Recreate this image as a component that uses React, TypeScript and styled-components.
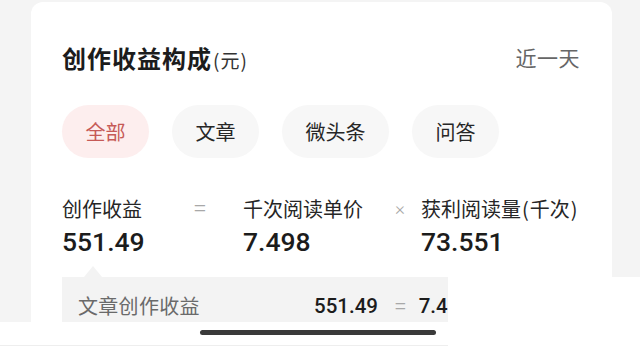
import React from "react";
import styled, { createGlobalStyle } from "styled-components";

const GlobalStyle = createGlobalStyle`
  html, body { margin: 0; padding: 0; background: #ffffff; }
  body {
    font-family: "Noto Sans CJK SC", "Noto Sans", Roboto, sans-serif;
    -webkit-font-smoothing: antialiased;
  }
  * { box-sizing: border-box; }
`;

const Frame = styled.div`
  position: relative;
  width: 640px;
  height: 346px;
  overflow: hidden;
  background: #ffffff;
  display: flex;
  flex-direction: column;
`;

const Screen = styled.div`
  height: 322px;
  flex: none;
  overflow: hidden;
  background: #f4f4f4;
  padding: 2px 28px 0 31px;
`;

const Card = styled.section`
  background: #ffffff;
  border-radius: 12px;
  height: 420px;
  padding: 35px 32px 0 31px;
`;

const Header = styled.div`
  height: 40px;
  display: flex;
  align-items: center;
  justify-content: space-between;
`;

const Title = styled.h2`
  margin: 0;
  font-size: 24px;
  font-weight: 700;
  letter-spacing: 1px;
  color: #1c1c1c;
  display: flex;
  align-items: baseline;
`;

const Unit = styled.span`
  font-size: 19px;
  font-weight: 400;
  letter-spacing: 1px;
  margin-left: 1px;
  color: #333;
`;

const Range = styled.span`
  font-size: 21px;
  color: #666;
  letter-spacing: 0.5px;
`;

const Tabs = styled.div`
  display: flex;
  gap: 23px;
  margin-top: 28px;
`;

const Tab = styled.button<{ $active?: boolean }>`
  height: 53px;
  padding: 0 23.5px;
  border: none;
  border-radius: 27px;
  font-family: inherit;
  font-size: 20px;
  line-height: 1;
  background: ${(p) => (p.$active ? "#fdeeee" : "#f7f7f7")};
  color: ${(p) => (p.$active ? "#c65a57" : "#262626")};
`;

const Formula = styled.div`
  display: grid;
  grid-template-columns: 131px 50px 152px 26px auto;
  grid-template-rows: 26px 32px;
  row-gap: 4px;
  margin-top: 38px;
`;

const Label = styled.div`
  font-size: 20px;
  line-height: 26px;
  color: #262626;
  white-space: nowrap;
`;

const Paren = styled.span`
  margin: 0 1px;
`;

const Operator = styled.div<{ $small?: boolean }>`
  font-family: Roboto, sans-serif;
  font-size: ${(p) => (p.$small ? "19px" : "25px")};
  font-weight: 300;
  line-height: 26px;
  color: #a8a8a8;
`;

const Value = styled.div`
  font-family: Roboto, sans-serif;
  font-size: 26.5px;
  font-weight: 500;
  line-height: 32px;
  color: #1c1c1c;
`;

const Tooltip = styled.div`
  position: relative;
  margin-top: 19px;
  background: #f3f3f3;
  height: 80px;
  padding: 16px 16px 0;
  display: flex;
  align-items: flex-start;

  &::before {
    content: "";
    position: absolute;
    left: 22px;
    top: -11px;
    border-left: 9px solid transparent;
    border-right: 9px solid transparent;
    border-bottom: 11px solid #f3f3f3;
  }
`;

const TipLabel = styled.div`
  width: 236px;
  flex: none;
  font-size: 20px;
  line-height: 26px;
  color: #6a6a6a;
  letter-spacing: 0.3px;
`;

const TipValues = styled.div`
  display: flex;
  align-items: center;
  height: 26px;
  font-family: Roboto, sans-serif;
  font-size: 20.5px;
  font-weight: 500;
  color: #1c1c1c;
  white-space: nowrap;
`;

const TipOp = styled.span`
  font-weight: 300;
  font-size: 23px;
  color: #a8a8a8;
  margin: 0 12px 0 16px;
`;

const BottomBar = styled.div`
  flex: 1;
  background: #ffffff;
  border-bottom: 1px solid #eeeeee;
  padding: 8px 0 0 200px;
`;

const HomeIndicator = styled.div`
  width: 236px;
  height: 5px;
  border-radius: 3px;
  background: #3a3a3a;
`;

const EdgeMask = styled.div`
  position: absolute;
  left: 448px;
  top: 277px;
  right: 0;
  bottom: 0;
  background: #ffffff;
`;

const tabs = ["全部", "文章", "微头条", "问答"];

export default function App() {
  return (
    <>
      <GlobalStyle />
      <Frame>
        <Screen>
          <Card>
            <Header>
              <Title>
                创作收益构成<Unit>(元)</Unit>
              </Title>
              <Range>近一天</Range>
            </Header>
            <Tabs>
              {tabs.map((t, i) => (
                <Tab key={t} $active={i === 0}>
                  {t}
                </Tab>
              ))}
            </Tabs>
            <Formula>
              <Label>创作收益</Label>
              <Operator>=</Operator>
              <Label>千次阅读单价</Label>
              <Operator $small>×</Operator>
              <Label>
                获利阅读量<Paren>(</Paren>千次<Paren>)</Paren>
              </Label>
              <Value>551.49</Value>
              <div />
              <Value>7.498</Value>
              <div />
              <Value>73.551</Value>
            </Formula>
            <Tooltip>
              <TipLabel>文章创作收益</TipLabel>
              <TipValues>
                551.49<TipOp>=</TipOp>7.4
              </TipValues>
            </Tooltip>
          </Card>
        </Screen>
        <BottomBar>
          <HomeIndicator />
        </BottomBar>
        <EdgeMask />
      </Frame>
    </>
  );
}
